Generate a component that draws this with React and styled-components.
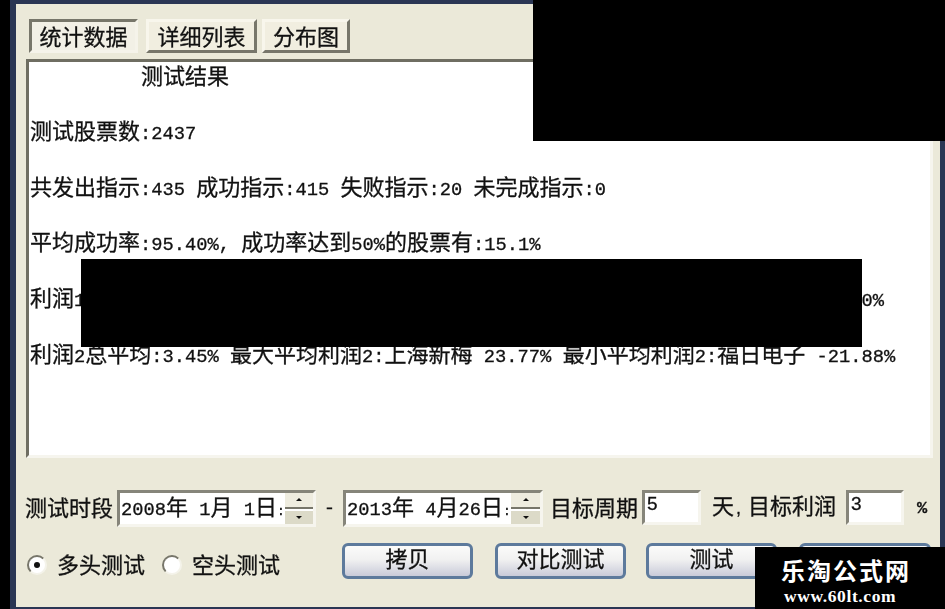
import React from 'react'
import styled, { createGlobalStyle } from 'styled-components'

const Global = createGlobalStyle`
    html, body {
        margin: 0;
        padding: 0;
        width: 945px;
        height: 609px;
        overflow: hidden;
        background: #000;
    }
    * { box-sizing: border-box; }
`

const cjk = '"Noto Sans CJK SC", "Liberation Sans", sans-serif'

const Page = styled.div`
    position: relative;
    width: 945px;
    height: 609px;
    padding-left: 10px;
    background: #000;
    font-family: ${cjk};
    color: #111;
`
const Window = styled.div`
    width: 935px;
    height: 609px;
    border-style: solid;
    border-color: #2a3654;
    border-width: 4px 5px 2px 6px;
    background: #ebe9d9;
    filter: blur(0.45px);
    -webkit-text-stroke: 0.3px #111;
`
const Tabs = styled.div`
    display: flex;
    align-items: flex-start;
    padding: 15px 0 0 13px;
    height: 49px;
`
const Tab = styled.div`
    width: ${(p) => p.$w}px;
    height: 34px;
    margin-right: ${(p) => p.$gap}px;
    padding-bottom: 3px;
    display: flex;
    align-items: center;
    justify-content: center;
    font-size: 22px;
    line-height: 1;
    background: ${(p) => (p.$active ? '#f2f0e6' : '#f1eee0')};
    border-style: solid;
    border-width: 3px;
    border-color: ${(p) =>
        p.$active
            ? '#77766a #f5f3ea #f5f3ea #77766a'
            : '#f8f6ec #77766a #77766a #f8f6ec'};
`
const Panel = styled.div`
    margin: 6px 7px 0 10px;
    height: 399px;
    background: #fff;
    border-style: solid;
    border-width: 3px;
    border-color: #6f6e62 #f6f5ee #f6f5ee #6f6e62;
    padding-left: 1px;
`
const Title = styled.div`
    height: 32px;
    padding-left: 111px;
    font-size: 22px;
    line-height: 24px;
`
const Lines = styled.div`
    padding-top: 8px;
`
const Line = styled.div`
    height: 55.7px;
    line-height: 55.7px;
    font-size: 22px;
    white-space: pre;
`
const SplitLine = styled(Line)`
    display: flex;
    align-items: baseline;
    justify-content: space-between;
    width: 854px;
`
const Num = styled.span`
    font-family: "Liberation Mono", monospace;
    font-size: 18.75px;
    white-space: pre;
`
const Row = styled.div`
    display: flex;
    align-items: center;
`
const FieldRow = styled(Row)`
    margin-top: 32px;
    height: 37px;
    padding-left: 9px;
`
const Label = styled.div`
    font-size: 22px;
    line-height: 33px;
    padding-bottom: 4px;
    white-space: pre;
    margin-left: ${(p) => p.$left || 0}px;
`
const Comma = styled.span`
    display: inline-block;
    width: 14px;
    font-family: "Liberation Sans", sans-serif;
    font-size: 18px;
    padding-left: 2px;
`
const DateBox = styled.div`
    width: ${(p) => p.$w}px;
    height: 37px;
    margin-left: ${(p) => p.$left || 0}px;
    display: flex;
    background: #fff;
    border-style: solid;
    border-width: 3px;
    border-color: #86857a #f6f5ee #f6f5ee #86857a;
`
const DateText = styled.div`
    flex: 1;
    padding-left: 1px;
    font-size: 22px;
    line-height: 24px;
    white-space: pre;
`
const DateColon = styled(Num)`
    font-size: 13px;
`
const Spin = styled.div`
    width: 29px;
    display: flex;
    flex-direction: column;
    gap: 2px;
    background: #fff;
`
const SpinPart = styled.div`
    flex: 1;
    display: flex;
    align-items: center;
    justify-content: center;
    background: ${(p) => (p.$up ? '#eeecdf' : '#dcdac8')};
    border-bottom: ${(p) => (p.$up ? '2px solid #77766a' : '0')};
    &::after {
        content: '';
        width: 0;
        height: 0;
        border-left: 3px solid transparent;
        border-right: 3px solid transparent;
        border-${(p) => (p.$up ? 'bottom' : 'top')}: 3px solid #111;
    }
`
const Dash = styled.div`
    width: 27px;
    text-align: center;
    font-size: 20px;
    line-height: 31px;
    padding-bottom: 6px;
`
const NumBox = styled.div`
    width: ${(p) => p.$w}px;
    height: 35px;
    margin: 0 0 2px ${(p) => p.$left || 0}px;
    padding-left: 2px;
    background: #fff;
    border-style: solid;
    border-width: 3px;
    border-color: #86857a #f6f5ee #f6f5ee #86857a;
    font-family: "Liberation Sans", sans-serif;
    font-size: 19px;
    line-height: 22px;
`
const Percent = styled(Num)`
    margin-left: 13px;
    font-weight: bold;
    font-size: 17px;
`
const ActionRow = styled(Row)`
    margin-top: 16px;
    height: 36px;
    padding-left: 11px;
`
const Radio = styled.div`
    width: 20px;
    height: 20px;
    flex: none;
    border-radius: 50%;
    margin: 8px 0 0 ${(p) => p.$left || 0}px;
    display: flex;
    align-items: center;
    justify-content: center;
    background: #fff;
    border: 2px solid;
    border-color: #77766a #f4f3ea #f4f3ea #77766a;
    &::after {
        content: '';
        width: 6px;
        height: 6px;
        border-radius: 50%;
        background: ${(p) => (p.$on ? '#111' : 'transparent')};
    }
`
const RadioLabel = styled.div`
    margin-left: 10px;
    padding-top: 4px;
    font-size: 22px;
    line-height: 36px;
`
const Button = styled.div`
    width: ${(p) => p.$w}px;
    height: 36px;
    margin-left: ${(p) => p.$left}px;
    display: flex;
    align-items: center;
    justify-content: center;
    padding-bottom: 9px;
    font-size: 22px;
    line-height: 24px;
    border: 3px solid #5d7a9c;
    border-radius: 6px;
    background: linear-gradient(#fbfbfa 0%, #f1f1f1 45%, #c9cbd9 100%);
`
const TopCover = styled.div`
    position: absolute;
    left: 533px;
    top: 0;
    width: 412px;
    height: 141px;
    background: #000;
`
const MiddleCover = styled.div`
    position: absolute;
    left: 81px;
    top: 259px;
    width: 781px;
    height: 88px;
    background: #000;
`
const Logo = styled.div`
    position: absolute;
    left: 755px;
    top: 547px;
    width: 190px;
    height: 62px;
    padding-left: 26px;
    background: #000;
    color: #fff;
`
const LogoName = styled.div`
    font-size: 24px;
    font-weight: 700;
    letter-spacing: 2px;
    line-height: 30px;
    margin-top: 8px;
    white-space: nowrap;
`
const LogoUrl = styled.div`
    font-family: "Liberation Serif", serif;
    font-weight: 700;
    font-size: 17.5px;
    letter-spacing: 0.6px;
    line-height: 18px;
    margin: 2px 0 0 3px;
`

export default function App() {
    return (
        <Page>
            <Global />
            <Window>
                <Tabs>
                    <Tab $active $w={109} $gap={8}>统计数据</Tab>
                    <Tab $w={111} $gap={5}>详细列表</Tab>
                    <Tab $w={88} $gap={0}>分布图</Tab>
                </Tabs>
                <Panel>
                    <Title>测试结果</Title>
                    <Lines>
                        <Line>测试股票数<Num>:2437</Num></Line>
                        <Line>共发出指示<Num>:435 </Num>成功指示<Num>:415 </Num>失败指示<Num>:20 </Num>未完成指示<Num>:0</Num></Line>
                        <Line>平均成功率<Num>:95.40%, </Num>成功率达到<Num>50%</Num>的股票有<Num>:15.1%</Num></Line>
                        <SplitLine><span>利润<Num>1</Num></span><Num>0%</Num></SplitLine>
                        <Line>利润<Num>2</Num>总平均<Num>:3.45% </Num>最大平均利润<Num>2:</Num>上海新梅<Num> 23.77% </Num>最小平均利润<Num>2:</Num>福日电子<Num> -21.88%</Num></Line>
                    </Lines>
                </Panel>
                <FieldRow>
                    <Label>测试时段</Label>
                    <DateBox $w={199} $left={4}>
                        <DateText><Num>2008</Num>年<Num> 1</Num>月<Num> 1</Num>日<DateColon>:</DateColon></DateText>
                        <Spin><SpinPart $up /><SpinPart /></Spin>
                    </DateBox>
                    <Dash>-</Dash>
                    <DateBox $w={200}>
                        <DateText><Num>2013</Num>年<Num> 4</Num>月<Num>26</Num>日<DateColon>:</DateColon></DateText>
                        <Spin><SpinPart $up /><SpinPart /></Spin>
                    </DateBox>
                    <Label $left={7}>目标周期</Label>
                    <NumBox $w={59} $left={4}>5</NumBox>
                    <Label $left={11}>天<Comma>,</Comma>目标利润</Label>
                    <NumBox $w={58} $left={10}>3</NumBox>
                    <Percent>%</Percent>
                </FieldRow>
                <ActionRow>
                    <Radio $on />
                    <RadioLabel>多头测试</RadioLabel>
                    <Radio $left={17} />
                    <RadioLabel>空头测试</RadioLabel>
                    <Button $w={131} $left={62}>拷贝</Button>
                    <Button $w={131} $left={22}>对比测试</Button>
                    <Button $w={131} $left={20}>测试</Button>
                    <Button $w={132} $left={22} />
                </ActionRow>
            </Window>
            <TopCover />
            <MiddleCover />
            <Logo>
                <LogoName>乐淘公式网</LogoName>
                <LogoUrl>www.60lt.com</LogoUrl>
            </Logo>
        </Page>
    )
}
